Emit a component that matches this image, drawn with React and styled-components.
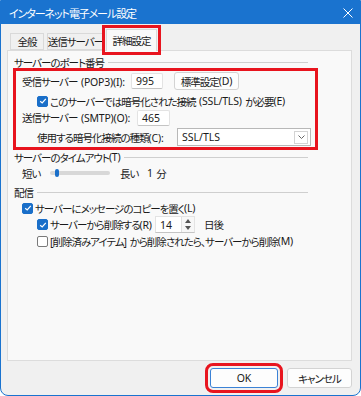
import React from 'react';
import styled, { createGlobalStyle } from 'styled-components';

const GlobalStyle = createGlobalStyle`
  html, body {
    margin: 0;
    padding: 0;
    background: #ffffff;
  }
  body {
    font-family: "Noto Sans", "Noto Sans CJK JP", sans-serif;
    font-feature-settings: "palt";
    font-size: 10.5px;
    letter-spacing: -1px;
    color: #1a1a1a;
  }
`;

// latin runs (and their spaces) are kept closer to their natural width
const En = styled.span`
  letter-spacing: -0.2px;
  word-spacing: 1px;
  white-space: pre;
`;

const Window = styled.div`
  width: 361px;
  height: 396px;
  box-sizing: border-box;
  border: 1px solid #1a73cf;
  border-radius: 0 0 8px 8px;
  background: #f0f0f0;
  display: flex;
  flex-direction: column;
  overflow: hidden;
`;

const TitleBar = styled.div`
  height: 23px;
  background: #1a73cf;
  color: #ffffff;
  display: flex;
  align-items: center;
  justify-content: space-between;
  padding: 0 7px 0 8px;
  font-size: 11px;
  letter-spacing: -1.1px;
`;

const Body = styled.div`
  flex: 1;
  display: flex;
  flex-direction: column;
  padding: 2px 8px 0 6px;
`;

const TabStrip = styled.div`
  display: flex;
  align-items: flex-end;
  height: 24px;
  padding-left: 3px;
  position: relative;
  z-index: 1;
`;

const Tab = styled.div`
  width: ${p => p.w}px;
  height: ${p => (p.active ? '22px' : '17px')};
  box-sizing: border-box;
  margin-bottom: ${p => (p.active ? '-1px' : '0')};
  margin-right: ${p => p.gap || 0}px;
  display: flex;
  align-items: center;
  justify-content: center;
  background: ${p => (p.active ? '#f9f9f9' : '#f0f0f0')};
  border: 1px solid #d9d9d9;
  border-bottom: ${p => (p.active ? 'none' : '1px solid #d9d9d9')};
  outline: ${p => (p.active ? '3px solid #e8141e' : 'none')};
  outline-offset: 1px;
  white-space: nowrap;
`;

const Panel = styled.div`
  height: 311px;
  box-sizing: border-box;
  background: #f9f9f9;
  border: 1px solid #dcdcdc;
  padding: 4px 0 0 6px;
  display: flex;
  flex-direction: column;
`;

const GroupHead = styled.div`
  display: flex;
  align-items: center;
  height: 14px;
  margin-top: ${p => p.top || 0}px;
  width: 294px;
  white-space: nowrap;
  &::after {
    content: '';
    flex: 1;
    height: 1px;
    background: #cfcfcf;
    margin-left: 4px;
  }
`;

const Highlight = styled.div`
  width: 305px;
  box-sizing: border-box;
  margin: -1px 0 0 -1px;
  border: 3px solid #e8141e;
  padding: 1px 0 1px 6px;
  display: flex;
  flex-direction: column;
`;

const Row = styled.div`
  display: flex;
  align-items: center;
  height: ${p => p.h || 18}px;
  margin-top: ${p => p.top || 0}px;
  padding-left: ${p => p.indent || 0}px;
  white-space: nowrap;
`;

const Label = styled.span`
  width: ${p => (p.w ? `${p.w}px` : 'auto')};
  flex-shrink: 0;
`;

const TextBox = styled.div`
  width: ${p => p.w}px;
  height: 16px;
  box-sizing: border-box;
  background: #ffffff;
  border: 1px solid #e3e3e3;
  border-bottom-color: #c4c4c4;
  border-radius: 2px;
  padding-left: 4px;
  display: flex;
  align-items: center;
  letter-spacing: 0;
`;

const Button = styled.div`
  width: ${p => p.w}px;
  height: ${p => p.h || 18}px;
  box-sizing: border-box;
  background: #fdfdfd;
  border: 1px solid ${p => (p.primary ? '#3b82d6' : '#d3d3d3')};
  border-radius: 3px;
  display: flex;
  align-items: center;
  justify-content: center;
  margin-left: ${p => p.ml || 0}px;
  outline: ${p => (p.marked ? '3px solid #e8141e' : 'none')};
  outline-offset: 2px;
`;

const Select = styled.div`
  width: 134px;
  height: 18px;
  box-sizing: border-box;
  background: #ffffff;
  border: 1px solid #b8b8b8;
  display: flex;
  align-items: center;
  justify-content: space-between;
  padding: 0 2px 0 4px;
  letter-spacing: 0;
`;

const DropBtn = styled.div`
  width: 12px;
  height: 11px;
  border: 1px solid #d4d4d4;
  display: flex;
  align-items: center;
  justify-content: center;
`;

const Box = styled.span`
  width: 11px;
  height: 11px;
  box-sizing: border-box;
  border-radius: 2px;
  background: ${p => (p.checked ? '#1a6fc9' : '#ffffff')};
  border: 1px solid ${p => (p.checked ? '#1a6fc9' : '#7a7a7a')};
  display: inline-flex;
  align-items: center;
  justify-content: center;
  margin-right: 2px;
  flex-shrink: 0;
`;

const Track = styled.div`
  width: 60px;
  height: 4px;
  border-radius: 2px;
  background: #d8d8d8;
  margin-right: 10px;
  display: flex;
  align-items: center;
  padding-left: 5px;
  box-sizing: border-box;
`;

const Thumb = styled.div`
  width: 4px;
  height: 8px;
  border-radius: 2px;
  background: #1a6fc9;
`;

const Spin = styled.div`
  width: 40px;
  height: 17px;
  box-sizing: border-box;
  background: #ffffff;
  border: 1px solid #e3e3e3;
  border-bottom-color: #c4c4c4;
  display: flex;
  margin-right: 9px;
  letter-spacing: 0;
`;

const SpinValue = styled.div`
  flex: 1;
  padding-left: 4px;
  display: flex;
  align-items: center;
`;

const SpinArrows = styled.div`
  width: 12px;
  border-left: 1px solid #e0e0e0;
  display: flex;
  flex-direction: column;
  align-items: center;
  justify-content: space-around;
  background: #f7f7f7;
`;

const Footer = styled.div`
  flex: 1;
  display: flex;
  justify-content: flex-end;
  align-items: flex-start;
  padding: 7px 0 0 0;
  gap: 9px;
`;

const Check = ({ checked }) => (
  <Box checked={checked}>
    {checked && (
      <svg width="8" height="8" viewBox="0 0 8 8">
        <path d="M1.2 4.2 L3.2 6 L6.8 1.8" fill="none" stroke="#fff" strokeWidth="1.2" />
      </svg>
    )}
  </Box>
);

export default function App() {
  return (
    <>
      <GlobalStyle />
      <Window>
        <TitleBar>
          <span>インターネット電子メール設定</span>
          <svg width="10" height="10" viewBox="0 0 10 10">
            <path d="M0.5 0.5 L9.5 9.5 M9.5 0.5 L0.5 9.5" stroke="#fff" strokeWidth="1" />
          </svg>
        </TitleBar>
        <Body>
          <TabStrip>
            <Tab w={34} gap={3}>全般</Tab>
            <Tab w={57} gap={2}>送信サーバー</Tab>
            <Tab w={51} active>詳細設定</Tab>
          </TabStrip>
          <Panel>
            <GroupHead>サーバーのポート番号</GroupHead>
            <Highlight>
              <Row h={18}>
                <Label w={109}>受信サーバー<En>{' (POP3)(I):'}</En></Label>
                <TextBox w={32}>995</TextBox>
                <Button w={65} ml={11}>標準設定<En>(D)</En></Button>
              </Row>
              <Row h={16} top={3} indent={15}>
                <Check checked />
                このサーバーでは暗号化された接続<En>{' (SSL/TLS) '}</En>が必要<En>(E)</En>
              </Row>
              <Row h={17}>
                <Label w={115}>送信サーバー<En>{' (SMTP)(O):'}</En></Label>
                <TextBox w={33}>465</TextBox>
              </Row>
              <Row h={18} top={2} indent={15}>
                <Label w={140}>使用する暗号化接続の種類<En>(C):</En></Label>
                <Select>
                  SSL/TLS
                  <DropBtn>
                    <svg width="7" height="4" viewBox="0 0 7 4">
                      <path d="M0.5 0.5 L3.5 3.5 L6.5 0.5" fill="none" stroke="#666" strokeWidth="1" />
                    </svg>
                  </DropBtn>
                </Select>
              </Row>
            </Highlight>
            <GroupHead>サーバーのタイムアウト<En>(T)</En></GroupHead>
            <Row h={18} indent={8}>
              <Label w={28}>短い</Label>
              <Track>
                <Thumb />
              </Track>
              <Label w={27}>長い</Label>
              <En>{'1 '}</En>分
            </Row>
            <GroupHead top={3}>配信</GroupHead>
            <Row h={16} top={1} indent={8}>
              <Check checked />
              サーバーにメッセージのコピーを置く<En>(L)</En>
            </Row>
            <Row h={17} indent={23}>
              <Check checked />
              <Label w={105}>サーバーから削除する<En>(R)</En></Label>
              <Spin>
                <SpinValue>14</SpinValue>
                <SpinArrows>
                  <svg width="6" height="4" viewBox="0 0 6 4"><path d="M0 4 L3 0 L6 4 Z" fill="#555" /></svg>
                  <svg width="6" height="4" viewBox="0 0 6 4"><path d="M0 0 L3 4 L6 0 Z" fill="#555" /></svg>
                </SpinArrows>
              </Spin>
              日後
            </Row>
            <Row h={16} indent={23}>
              <Check />
              [削除済みアイテム]<En>{' '}</En>から削除されたら、サーバーから削除<En>(M)</En>
            </Row>
          </Panel>
          <Footer>
            <Button w={68} h={20} primary marked><En>OK</En></Button>
            <Button w={65} h={20}>キャンセル</Button>
          </Footer>
        </Body>
      </Window>
    </>
  );
}
